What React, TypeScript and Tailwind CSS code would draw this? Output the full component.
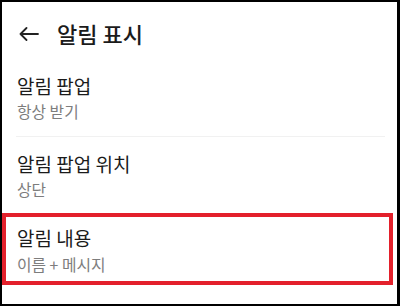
const font = "font-['Noto_Sans_CJK_KR','Noto_Sans',sans-serif]"

function BackArrow() {
  return (
    <svg width="20" height="14" viewBox="0 0 20 14" fill="none" className="text-[#222]">
      <path d="M1.5 7H19M7.5 1L1.5 7L7.5 13" stroke="currentColor" strokeWidth="1.8" strokeLinecap="round" strokeLinejoin="round" />
    </svg>
  )
}

function Row({ title, value }: { title: string; value: string }) {
  return (
    <>
      <p className="text-[19px] leading-[24px] text-[#1b1b1b]">{title}</p>
      <p className="mt-1 text-[15.8px] leading-[20px] text-[#7d7d7d]">{value}</p>
    </>
  )
}

export default function App() {
  return (
    <div className={`${font} w-[400px] h-[306px] bg-white border-t-2 border-l-2 border-r-[3px] border-b-2 border-black overflow-hidden`}>
      <div className="h-[62px] flex items-center">
        <div className="ml-[17px] mt-px">
          <BackArrow />
        </div>
        <h1 className="ml-[18px] text-[22px] font-medium text-[#1b1b1b] leading-none">알림 표시</h1>
      </div>

      <div className="pl-[15px] pt-[10px] pb-[14px]">
        <Row title="알림 팝업" value="항상 받기" />
      </div>
      <div className="ml-[14px] w-[369px] h-px bg-[#f1f1f1]" />
      <div className="pl-[15px] pt-[15px]">
        <Row title="알림 팝업 위치" value="상단" />
      </div>

      <div className="mt-[13px] w-[391px] h-[72px] border-4 border-[#e3202b] pl-[11px] pt-[9px]">
        <p className="text-[19px] leading-[24px] text-[#1b1b1b]">알림 내용</p>
        <p className="mt-[5px] text-[15.8px] leading-[20px] text-[#7d7d7d]">이름 + 메시지</p>
      </div>
    </div>
  )
}
